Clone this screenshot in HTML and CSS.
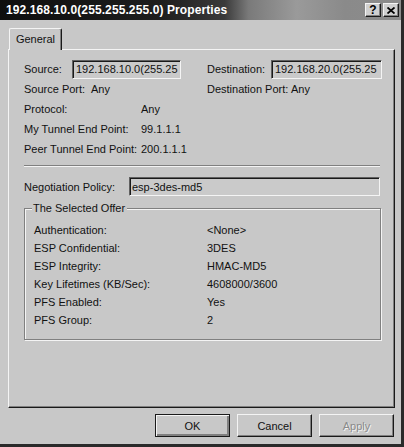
FILE: index.html
```html
<!DOCTYPE html>
<html lang="en">
<head>
    <meta charset="UTF-8">
    <meta name="viewport" content="width=device-width, initial-scale=1.0">
    <title>192.168.10.0(255.255.255.0) Properties</title>
    <link rel="stylesheet" href="styles.css">
</head>
<body>
    <div class="window">
        <div class="titlebar">
            <span class="title">192.168.10.0(255.255.255.0) Properties</span>
            <div class="caption-buttons">
                <span class="cap-btn">?</span>
                <span class="cap-btn">
                    <svg width="8" height="7" viewBox="0 0 8 7">
                        <path d="M0.5 0.5 L7.5 6.5 M7.5 0.5 L0.5 6.5" stroke="#000" stroke-width="1.8" fill="none"/>
                    </svg>
                </span>
            </div>
        </div>

        <div class="dialog-body">
            <div class="tabs">
                <div class="tab active">General</div>
            </div>

            <div class="panel">
                <!-- 터널 끝점 정보 -->
                <div class="row">
                    <div class="half">
                        <span class="lbl lbl-source">Source:</span>
                        <span class="textbox tb-source">192.168.10.0(255.25</span>
                    </div>
                    <div class="half">
                        <span class="lbl lbl-dest">Destination:</span>
                        <span class="textbox tb-dest">192.168.20.0(255.25</span>
                    </div>
                </div>
                <div class="row">
                    <div class="half">
                        <span class="lbl lbl-sport">Source Port:</span>
                        <span>Any</span>
                    </div>
                    <div class="half">
                        <span class="lbl lbl-dport">Destination Port:</span>
                        <span>Any</span>
                    </div>
                </div>
                <div class="row">
                    <span class="lbl lbl-wide">Protocol:</span>
                    <span>Any</span>
                </div>
                <div class="row">
                    <span class="lbl lbl-wide">My Tunnel End Point:</span>
                    <span>99.1.1.1</span>
                </div>
                <div class="row">
                    <span class="lbl lbl-wide">Peer Tunnel End Point:</span>
                    <span>200.1.1.1</span>
                </div>

                <div class="separator"></div>

                <div class="row policy-row">
                    <span class="lbl lbl-policy">Negotiation Policy:</span>
                    <span class="textbox tb-policy">esp-3des-md5</span>
                </div>

                <!-- 선택된 제안 -->
                <fieldset class="group">
                    <legend>The Selected Offer</legend>
                    <div class="offer-list">
                        <span>Authentication:</span><span>&lt;None&gt;</span>
                        <span>ESP Confidential:</span><span>3DES</span>
                        <span>ESP Integrity:</span><span>HMAC-MD5</span>
                        <span>Key Lifetimes (KB/Sec):</span><span>4608000/3600</span>
                        <span>PFS Enabled:</span><span>Yes</span>
                        <span>PFS Group:</span><span>2</span>
                    </div>
                </fieldset>
            </div>

            <div class="button-row">
                <button class="btn default">OK</button>
                <button class="btn">Cancel</button>
                <button class="btn" disabled>Apply</button>
            </div>
        </div>
    </div>
</body>
</html>
```

FILE: styles.css
```css
body {
    margin: 0;
    font-family: 'Liberation Sans', Arial, sans-serif;
    font-size: 11px;
    color: #111;
    background-color: #c8c8c8;
}

.window {
    width: 404px;
    height: 447px;
    box-sizing: border-box;
    background-color: #c8c8c8;
    border-right: 3px solid #2a2a2a;
    border-bottom: 3px solid #2a2a2a;
    overflow: hidden;
}

.titlebar {
    height: 20px;
    display: flex;
    align-items: center;
    justify-content: space-between;
    padding-left: 6px;
    padding-right: 2px;
    background: linear-gradient(to right, #0e0e0e 0%, #1e1e1e 40%, #3a3a3a 56%, #7a7a7a 62%, #9a9a9a 74%, #8a8a8a 86%, #8c8c8c 100%);
}

.title {
    color: #fff;
    font-weight: bold;
    font-size: 12px;
    letter-spacing: 0.1px;
}

.caption-buttons {
    display: flex;
    gap: 2px;
}

.cap-btn {
    width: 16px;
    height: 14px;
    box-sizing: border-box;
    display: flex;
    align-items: center;
    justify-content: center;
    background-color: #d0d0d0;
    border: 1px solid;
    border-color: #f4f4f4 #1a1a1a #1a1a1a #f4f4f4;
    box-shadow: inset -1px -1px 0 #808080;
    font-weight: bold;
    font-size: 12px;
    line-height: 12px;
    color: #000;
}

.dialog-body {
    padding: 8px 0 0 8px;
}

.tabs {
    height: 21px;
    display: flex;
    padding-left: 1px;
}

.tab {
    position: relative;
    z-index: 1;
    width: 53px;
    height: 22px;
    box-sizing: border-box;
    display: flex;
    align-items: center;
    justify-content: center;
    padding-bottom: 1px;
    background-color: #c8c8c8;
    border-top: 1px solid #f4f4f4;
    border-left: 1px solid #f4f4f4;
    border-right: 1px solid #1a1a1a;
    box-shadow: inset -1px 0 0 #808080;
    border-radius: 2px 2px 0 0;
}

.panel {
    width: 387px;
    height: 359px;
    box-sizing: border-box;
    padding: 9px 0 0 15px;
    border: 1px solid;
    border-color: #f4f4f4 #1a1a1a #1a1a1a #f4f4f4;
    box-shadow: inset -1px -1px 0 #808080;
}

.row {
    display: flex;
    align-items: center;
    height: 20px;
}

.half {
    display: flex;
    align-items: center;
    width: 183px;
}

.lbl {
    flex-shrink: 0;
}

.lbl-source { width: 48px; }
.lbl-dest { width: 64px; }
.lbl-sport { width: 67px; }
.lbl-dport { width: 84px; }
.lbl-wide { width: 117px; }
.lbl-policy { width: 105px; }

.textbox {
    height: 19px;
    box-sizing: border-box;
    display: flex;
    align-items: center;
    padding-left: 3px;
    white-space: nowrap;
    overflow: hidden;
    background-color: #cacaca;
    border: 1px solid;
    border-color: #606060 #f4f4f4 #f4f4f4 #606060;
    box-shadow: inset 1px 1px 0 #1a1a1a;
}

.tb-source { width: 109px; }
.tb-dest { width: 111px; }
.tb-policy { width: 251px; padding-left: 2px; }

.separator {
    width: 356px;
    height: 1px;
    margin-top: 6px;
    background-color: #808080;
    border-bottom: 1px solid #f4f4f4;
}

.policy-row {
    margin-top: 10px;
    height: 19px;
}

.group {
    width: 357px;
    box-sizing: border-box;
    margin: 6px 0 0 0;
    padding: 0 0 10px 7px;
    border: 1px solid #808080;
    box-shadow: inset 1px 1px 0 #f4f4f4, 1px 1px 0 #f4f4f4;
}

.group legend {
    padding: 0 2px 0 1px;
    line-height: 13px;
    background-color: #c8c8c8;
}

.offer-list {
    display: grid;
    grid-template-columns: 173px auto;
    grid-auto-rows: 18px;
    align-items: center;
    margin-top: 6px;
    padding-left: 2px;
}

.button-row {
    display: flex;
    justify-content: flex-end;
    gap: 7px;
    width: 386px;
    margin-top: 6px;
}

.btn {
    width: 75px;
    height: 23px;
    box-sizing: border-box;
    padding: 0;
    font-family: inherit;
    font-size: 11px;
    color: #111;
    background-color: #c8c8c8;
    border: 1px solid;
    border-color: #f4f4f4 #1a1a1a #1a1a1a #f4f4f4;
    box-shadow: inset -1px -1px 0 #808080;
}

.btn.default {
    border: 1px solid #1a1a1a;
    box-shadow: inset 1px 1px 0 #f4f4f4, inset -2px -2px 0 #808080;
}

.btn:disabled {
    color: #8a8a8a;
    text-shadow: 1px 1px 0 #f4f4f4;
}
```
